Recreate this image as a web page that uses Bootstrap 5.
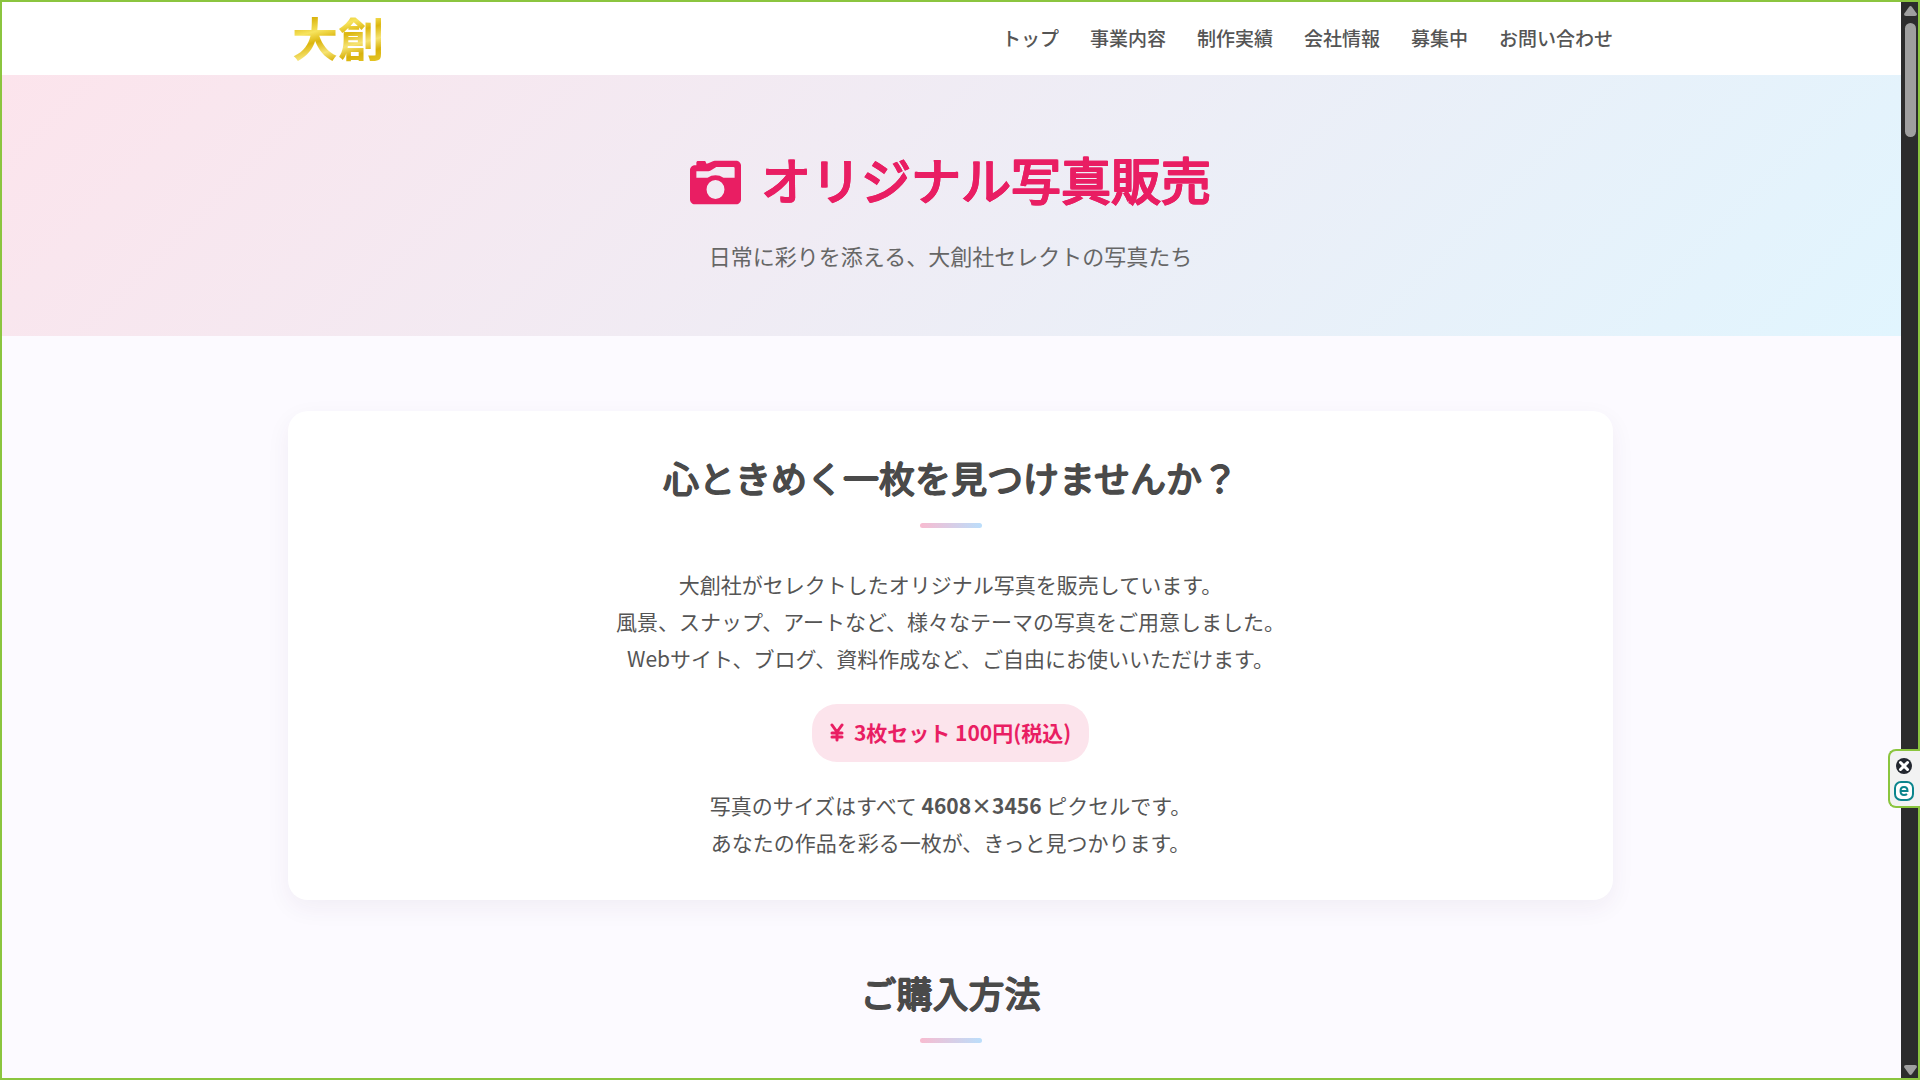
<!DOCTYPE html>
<html lang="ja">
<head>
<meta charset="utf-8">
<meta name="viewport" content="width=device-width, initial-scale=1">
<title>オリジナル写真販売 | 大創</title>
<link href="https://cdn.jsdelivr.net/npm/bootstrap@5.3.0/dist/css/bootstrap.min.css" rel="stylesheet">
<style>
body{font-family:"Noto Sans CJK JP",sans-serif;font-size:21px;line-height:37px;color:#555}
.page{background:#fcfaff}
.content-width{max-width:1325px}
.site-header{height:75px}
.brand-mark{font-size:46px;line-height:60px;padding:0 4px 4px;font-weight:700;background:linear-gradient(165deg,#d9b30c 20%,#f7e45e 36%,#dcb60e 48%,#f6e372 62%,#d9b20b 74%,#f0d840);-webkit-background-clip:text;background-clip:text;color:transparent}
.site-nav{gap:31px;font-size:19px;line-height:28px;font-weight:500}
.site-nav .nav-link{color:#555;padding:0}
.hero{background:linear-gradient(135deg,#fce4ec,#e1f5fe);padding:69px 0 63px}
.round-title{font-weight:400;text-shadow:1px 0,-1px 0,0 1px,0 -1px}
.hero-title{font-size:50px;line-height:69px;color:#e91e63;gap:20px;-webkit-text-stroke:2px currentColor}
.hero-title span{padding-bottom:8px}
.hero-title svg{width:51px;height:51px}
.hero-lead{font-size:22px;line-height:36px;color:#666}
.page main{padding-top:75px}
.intro-card{border-radius:20px;box-shadow:0 8px 25px rgba(60,40,90,.06);padding:40px 40px 38px;color:#555}
.section-title{font-size:36px;line-height:52px;margin-bottom:20px;color:#4a4a4a}
.title-bar{width:62px;height:5px;border-radius:3px;background:linear-gradient(90deg,#f8bbd0,#bbdefb)}
.intro-text{margin:38px 0 27px}
.size-text{margin-top:25px;padding-bottom:1px}
.how-to{padding-top:66px}
.price-tag{background:#fce4ec;color:#e91e63;border-radius:25px;padding:9px 18px 11px;line-height:38px;gap:10px}
.screen-frame{border:2px solid #8bc53f;pointer-events:none;z-index:5}
.side-scroll{width:19px;background:#2c2c2c;padding:6px 1px 5px 0}
.side-scroll .track-top{gap:7px}
.side-scroll .thumb{width:11px;height:114px;border-radius:6px;background:#9f9f9f}
.edge-tool{top:749px;right:0;width:32px;border:2px solid #8bc53f;border-right:0;border-radius:8px 0 0 8px;background:#f2f2f2;gap:6px;padding:6px 2px 5px 0;z-index:6}
.edge-tool button{line-height:0}
</style>
<script src="https://cdn.jsdelivr.net/npm/bootstrap@5.3.0/dist/js/bootstrap.bundle.min.js"></script>
</head>
<body class="vh-100 overflow-hidden d-flex">
<div class="page flex-fill overflow-hidden">
  <header class="site-header bg-white d-flex">
    <div class="content-width w-100 mx-auto d-flex align-items-center justify-content-between">
      <a href="#" class="brand-mark text-decoration-none">大創</a>
      <nav class="site-nav nav" aria-label="メイン">
        <a class="nav-link" href="#">トップ</a>
        <a class="nav-link" href="#">事業内容</a>
        <a class="nav-link" href="#">制作実績</a>
        <a class="nav-link" href="#">会社情報</a>
        <a class="nav-link" href="#">募集中</a>
        <a class="nav-link" href="#">お問い合わせ</a>
      </nav>
    </div>
  </header>
  <section class="hero text-center">
    <h1 class="hero-title round-title d-flex justify-content-center align-items-center mb-3">
      <svg viewBox="0 0 512 512" fill="currentColor" aria-hidden="true"><path fill-rule="evenodd" d="M48 84h16V56c0-9 7-16 16-16h64c9 0 16 7 16 16v8h18l52-22q8-4 18-4h216c26 0 48 22 48 48v340c0 26-22 48-48 48H48c-26 0-48-22-48-48V132c0-26 22-48 48-48zM64 144v64h112q36-24 80-24t80 24h112v-96q0-12-12-12H264l-56 36q-12 8-24 8zM256 230a90 96 0 1 0 0 192a90 96 0 1 0 0-192z" stroke="none"/></svg>
      <span>オリジナル写真販売</span>
    </h1>
    <p class="hero-lead mb-0">日常に彩りを添える、大創社セレクトの写真たち</p>
  </section>
  <main class="content-width mx-auto text-center">
    <section class="card intro-card border-0">
      <h2 class="section-title round-title">心ときめく一枚を見つけませんか？</h2>
      <div class="title-bar mx-auto"></div>
      <p class="intro-text">大創社がセレクトしたオリジナル写真を販売しています。<br>風景、スナップ、アートなど、様々なテーマの写真をご用意しました。<br>Webサイト、ブログ、資料作成など、ご自由にお使いいただけます。</p>
      <strong class="price-tag d-inline-flex align-items-center align-self-center">
        <svg width="14" height="20" viewBox="0 0 14 20" fill="none" stroke="currentColor" stroke-width="3" stroke-linecap="round" stroke-linejoin="round" aria-hidden="true"><path d="M2 3l5 7 5-7M7 10v8M2 11h10M2 15h10"/></svg>
        <span>3枚セット 100円(税込)</span>
      </strong>
      <p class="size-text mb-0">写真のサイズはすべて <strong>4608×3456</strong> ピクセルです。<br>あなたの作品を彩る一枚が、きっと見つかります。</p>
    </section>
    <section class="how-to">
      <h2 class="section-title round-title">ご購入方法</h2>
      <div class="title-bar mx-auto"></div>
    </section>
  </main>
</div>
<div class="side-scroll d-flex flex-column align-items-center justify-content-between flex-shrink-0" aria-hidden="true">
  <div class="track-top d-flex flex-column align-items-center">
    <svg width="13" height="10" viewBox="0 0 13 10" fill="#9f9f9f"><path d="M5 1q1.500-2 3 0l5 7q0 2-2 2H2q-2 0-2-2z"/></svg>
    <div class="thumb"></div>
  </div>
  <svg width="13" height="10" viewBox="0 0 13 10" fill="#9f9f9f"><path d="M5 9q1.500 2 3 0l5-7q0-2-2-2H2q-2 0-2 2z"/></svg>
</div>
<div class="edge-tool position-fixed d-flex flex-column align-items-center">
  <button type="button" class="border-0 bg-transparent p-0" aria-label="閉じる"><svg width="18" height="18" viewBox="0 0 18 18"><circle cx="9" cy="9" r="8" fill="#23272f"/><path d="M5.500 5.500l7 7M12.500 5.500l-7 7" stroke="#fff" stroke-width="3" stroke-linecap="round"/></svg></button>
  <button type="button" class="border-0 bg-transparent p-0" aria-label="ツール"><svg width="20" height="20" viewBox="0 0 20 20" fill="none" stroke="#0b858d"><rect x="1" y="1" width="18" height="18" rx="6" fill="#fff" stroke-width="2"/><path d="M6.500 10h7q0-4-3.500-4t-3.500 4q0 4 3.500 4 2 0 3-1" stroke-width="2"/></svg></button>
</div>
<div class="screen-frame position-fixed top-0 start-0 w-100 h-100"></div>
</body>
</html>
